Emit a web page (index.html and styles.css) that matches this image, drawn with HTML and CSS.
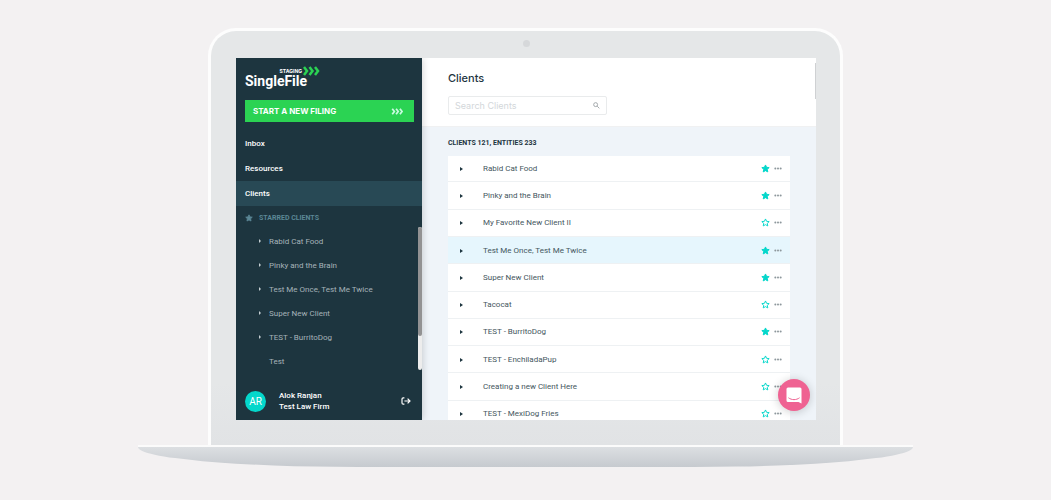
FILE: index.html
```html
<!DOCTYPE html>
<html lang="en">
<head>
    <meta charset="UTF-8">
    <meta name="viewport" content="width=device-width, initial-scale=1.0">
    <title>SingleFile - Clients</title>
    <link rel="stylesheet" href="styles.css">
</head>
<body>
    <svg class="sprite" aria-hidden="true">
        <symbol id="star" viewBox="0 0 24 24"><path d="M12 2.5l2.9 6.3 6.9.8-5.1 4.7 1.4 6.8-6.1-3.4-6.1 3.4 1.4-6.8-5.1-4.7 6.9-.8z" stroke-width="2.6" stroke="currentColor" stroke-linejoin="round"/></symbol>
        <symbol id="chevrons" viewBox="0 0 34 20"><path d="M2 2l6 8-6 8M13 2l6 8-6 8M24 2l6 8-6 8" fill="none" stroke="currentColor" stroke-width="5"/></symbol>
        <symbol id="dots" viewBox="0 0 24 8"><circle cx="4" cy="4" r="3"/><circle cx="12" cy="4" r="3"/><circle cx="20" cy="4" r="3"/></symbol>
    </svg>

    <div class="laptop">
        <div class="lid">
            <div class="camera"></div>
            <div class="screen">
                <aside class="sidebar">
                    <div class="logo">
                        <div class="logo-top">
                            <span>STAGING</span>
                            <svg class="logo-arrows"><use href="#chevrons"/></svg>
                        </div>
                        <div class="logo-name">SingleFile</div>
                    </div>
                    <button class="new-filing">START A NEW FILING <svg><use href="#chevrons"/></svg></button>
                    <nav class="nav">
                        <a href="#inbox">Inbox</a>
                        <a href="#resources">Resources</a>
                        <a href="#clients" class="active">Clients</a>
                    </nav>
                    <div class="starred-title"><svg><use href="#star"/></svg>STARRED CLIENTS</div>
                    <div class="starred">
                        <ul>
                            <li class="has-children"><a href="#rabid">Rabid Cat Food</a></li>
                            <li class="has-children"><a href="#pinky">Pinky and the Brain</a></li>
                            <li class="has-children"><a href="#once">Test Me Once, Test Me Twice</a></li>
                            <li class="has-children"><a href="#super">Super New Client</a></li>
                            <li class="has-children"><a href="#burrito">TEST - BurritoDog</a></li>
                            <li><a href="#test">Test</a></li>
                        </ul>
                        <div class="scrollbar"><div class="thumb"></div></div>
                    </div>
                    <div class="user">
                        <div class="avatar">AR</div>
                        <div class="user-name">Alok Ranjan<br>Test Law Firm</div>
                        <button class="logout" aria-label="Log out">
                            <svg viewBox="0 0 24 20"><path d="M8 2H5a3 3 0 0 0-3 3v10a3 3 0 0 0 3 3h3M8 10h14M16 4l6 6-6 6"/></svg>
                        </button>
                    </div>
                </aside>

                <main class="content">
                    <header class="header">
                        <h1>Clients</h1>
                        <div class="search">
                            <input type="text" aria-label="Search clients" placeholder="Search Clients">
                            <svg viewBox="0 0 16 16"><circle cx="6" cy="6" r="4.5"/><path d="M9.5 9.5l5 5"/></svg>
                        </div>
                    </header>
                    <section class="list">
                        <h2>CLIENTS 121, ENTITIES 233</h2>
                        <table>
                            <tbody id="clients"></tbody>
                        </table>
                    </section>
                    <div class="page-thumb"></div>
                    <button class="chat" aria-label="Open chat">
                        <svg viewBox="0 0 32 34"><path d="M4 1h24a3 3 0 0 1 3 3v29l-6-3H4a3 3 0 0 1-3-3V4a3 3 0 0 1 3-3z" fill="#fff"/><path d="M5.5 22c6 4.5 15 4.5 21 0" fill="none" stroke="#ef6292" stroke-width="2" stroke-linecap="round"/></svg>
                    </button>
                </main>
            </div>
        </div>
        <div class="base"></div>
    </div>

    <script>
        const clients = [
            { name: "Rabid Cat Food", starred: true },
            { name: "Pinky and the Brain", starred: true },
            { name: "My Favorite New Client II", starred: false },
            { name: "Test Me Once, Test Me Twice", starred: true, selected: true },
            { name: "Super New Client", starred: true },
            { name: "Tacocat", starred: false },
            { name: "TEST - BurritoDog", starred: true },
            { name: "TEST - EnchiladaPup", starred: false },
            { name: "Creating a new Client Here", starred: false },
            { name: "TEST - MexiDog Fries", starred: false }
        ];

        document.getElementById("clients").innerHTML = clients.map(c => `
            <tr class="${c.selected ? "selected" : ""}">
                <td class="toggle"><button aria-label="Expand"><span class="caret"></span></button></td>
                <td>${c.name}</td>
                <td class="actions">
                    <div>
                        <button class="star ${c.starred ? "on" : ""}" aria-label="Star"><svg><use href="#star"/></svg></button>
                        <button class="more" aria-label="More"><svg><use href="#dots"/></svg></button>
                    </div>
                </td>
            </tr>`).join("");
    </script>
</body>
</html>
```
FILE: styles.css
```css
* {
    box-sizing: border-box;
}
body {
    margin: 0;
    padding: 28px 16px;
    background: #f3f1f2;
    font-family: Roboto, "Liberation Sans", sans-serif;
    font-size: 8px;
    color: #1d353f;
}
button {
    font: inherit;
    color: inherit;
    background: none;
    border: 0;
    padding: 0;
    cursor: pointer;
}
a {
    color: inherit;
    text-decoration: none;
}
svg {
    display: block;
}
.sprite {
    position: absolute;
    width: 0;
    height: 0;
}

/* laptop */
.laptop {
    max-width: 775px;
    margin: 0 auto;
}
.lid {
    margin: 0 70px;
    padding: 0 24px 25px 25px;
    background: linear-gradient(#e5e7e8 85%, #e1e3e5);
    border: 3px solid #fdfdfd;
    border-bottom: 0;
    border-radius: 28px 28px 0 0;
}
.camera {
    width: 7px;
    height: 7px;
    margin: 0 auto;
    position: relative;
    top: 9px;
    border-radius: 50%;
    background: #d6d8da;
}
.screen {
    display: flex;
    height: 362px;
    margin-top: 20px;
    overflow: hidden;
}
.base {
    height: 22px;
    background: linear-gradient(#dcdfe2, #c6cacf);
    border-top: 2px solid #fbfbfb;
    border-radius: 0 0 220px 220px / 0 0 20px 20px;
}

/* sidebar */
.sidebar {
    width: 186px;
    flex-shrink: 0;
    display: flex;
    flex-direction: column;
    background: #1d353f;
    color: #fff;
    box-shadow: 0 0 8px rgba(0, 0, 0, 0.2);
    z-index: 1;
}
.logo {
    width: 75px;
    height: 42px;
    padding-top: 9px;
    margin-left: 9px;
}
.logo-top {
    display: flex;
    justify-content: flex-end;
    align-items: center;
    gap: 1px;
    height: 7px;
    font-family: Inter, sans-serif;
    font-size: 5px;
    font-weight: 700;
}
.logo-arrows {
    width: 17px;
    height: 10px;
    color: #2bd353;
}
.logo-name {
    font-size: 14px;
    font-weight: 700;
    line-height: 15px;
}
.new-filing {
    display: flex;
    align-items: center;
    justify-content: space-between;
    height: 22px;
    margin: 0 8px 9px 9px;
    padding: 0 10px 0 8px;
    background: #2bd353;
    font-family: Inter, sans-serif;
    font-weight: 700;
}
.new-filing svg {
    width: 13px;
    height: 7px;
    color: #c9fbe0;
}
.nav a {
    display: block;
    padding-left: 9px;
    line-height: 25px;
    font-weight: 500;
}
.nav .active {
    background: #284955;
}
.starred-title {
    display: flex;
    align-items: center;
    gap: 6px;
    height: 21px;
    padding: 2px 0 0 9px;
    font-size: 7px;
    font-weight: 700;
    color: #5b8795;
}
.starred-title svg {
    width: 8px;
    height: 8px;
    fill: currentColor;
}
.starred {
    display: flex;
    height: 143px;
}
.starred ul {
    flex: 1;
    margin: 0;
    padding: 2px 0 0 23px;
    list-style: none;
}
.starred li {
    display: flex;
    align-items: center;
    height: 24px;
    padding-left: 10px;
    color: #a5b3b9;
}
.starred .has-children {
    padding-left: 0;
}
.has-children::before {
    content: "";
    margin-right: 8px;
    border: 2px solid transparent;
    border-left-color: #c4ced2;
    border-right: 0;
}
.scrollbar {
    width: 4px;
    background: #ededed;
    border-radius: 2px;
}
.thumb {
    height: 109px;
    background: #929293;
    border-radius: 2px;
}
.user {
    display: flex;
    align-items: center;
    margin: auto 11px 8px 9px;
}
.avatar {
    width: 21px;
    height: 21px;
    margin-right: 13px;
    border-radius: 50%;
    background: #04d7cb;
    font-size: 10px;
    line-height: 21px;
    text-align: center;
}
.user-name {
    flex: 1;
    font-weight: 500;
    line-height: 11px;
}
.logout svg {
    width: 10px;
    height: 8px;
    fill: none;
    stroke: #fff;
    stroke-width: 3;
}

/* content */
.content {
    flex: 1;
    position: relative;
    background: #eff4f9;
}
.header {
    height: 69px;
    padding: 13px 26px 0;
    background: #fff;
    border-bottom: 1px solid #f0f1f2;
}
h1 {
    margin: 0 0 11px;
    font-family: Inter, sans-serif;
    font-size: 11px;
    font-weight: 500;
    line-height: 14px;
}
.search {
    display: flex;
    align-items: center;
    width: 159px;
    height: 19px;
    padding: 0 6px;
    border: 1px solid #e9ebec;
    border-radius: 2px;
}
.search input {
    flex: 1;
    min-width: 0;
    border: 0;
    padding: 0;
    outline: 0;
    font-family: Inter, sans-serif;
    font-size: 9px;
}
.search input::placeholder {
    color: #d3d7da;
}
.search svg {
    width: 7px;
    height: 7px;
    fill: none;
    stroke: #999fa2;
    stroke-width: 2;
}
.list {
    padding: 0 26px;
}
h2 {
    margin: 0;
    font-size: 7px;
    font-weight: 700;
    line-height: 28px;
    height: 29px;
    padding-top: 2px;
}
table {
    width: 100%;
    height: 272px;
    border-collapse: collapse;
    background: #fff;
    color: #44565e;
}
td {
    padding: 0;
    border-bottom: 1px solid #eef1f3;
}
.selected {
    background: #e6f6fd;
}
.toggle {
    width: 35px;
    padding-left: 12px;
}
.caret {
    display: block;
    border: 2px solid transparent;
    border-left: 3px solid #1d353f;
    border-right: 0;
}
.actions {
    width: 36px;
}
.actions div {
    display: flex;
    align-items: center;
    gap: 4px;
    padding-left: 7px;
}
.star svg {
    width: 9px;
    height: 9px;
    color: #04d7cb;
    fill: none;
}
.star.on svg {
    fill: currentColor;
}
.more svg {
    width: 8px;
    height: 3px;
    fill: #8d979c;
}
.page-thumb {
    position: absolute;
    top: 5px;
    right: 0;
    width: 1px;
    height: 36px;
    background: #cfd1d3;
}
.chat {
    position: absolute;
    right: 6px;
    bottom: 9px;
    width: 32px;
    height: 32px;
    border-radius: 50%;
    background: #ef6292;
    box-shadow: 0 1px 10px rgba(0, 0, 0, 0.2);
}
.chat svg {
    width: 16px;
    height: 17px;
    margin: auto;
}
```
